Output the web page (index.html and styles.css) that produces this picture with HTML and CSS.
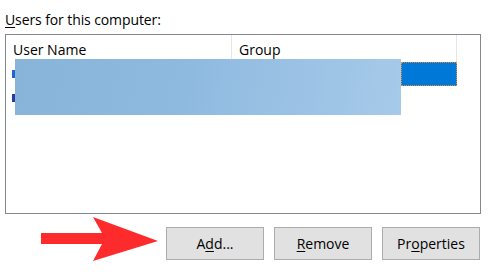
FILE: index.html
```html
<!DOCTYPE html>
<html lang="en">
<head>
  <meta charset="UTF-8" />
  <title>User Accounts</title>
  <link rel="stylesheet" href="styles.css">
</head>
<body>
  <div class="panel">
    <div class="label"><u>U</u>sers for this computer:</div>

    <!-- user list -->
    <div class="listbox">
      <div class="head">
        <div class="col name">User Name</div>
        <div class="col group">Group</div>
        <div class="col rest"></div>
      </div>
      <div class="row">
        <div class="cell name"><span class="ico"></span></div>
        <div class="cell group"></div>
        <div class="cell sel"></div>
      </div>
      <div class="row">
        <div class="cell name"><span class="ico dark"></span></div>
        <div class="cell group"></div>
        <div class="cell"></div>
      </div>
      <div class="blur"></div>
    </div>

    <!-- buttons -->
    <div class="actions">
      <svg class="arrow" width="120" height="46" viewBox="40 215 120 46">
        <polygon points="41,232 102,232 93,216 158,240 93,260 102,243 41,243" fill="#fd2b2b"/>
      </svg>
      <button>A<u>d</u>d...</button>
      <button><u>R</u>emove</button>
      <button>Pr<u>o</u>perties</button>
    </div>
  </div>
</body>
</html>
```

FILE: styles.css
```css
body { margin: 0; background: #fff; font-family: "Open Sans", "Noto Sans", sans-serif; font-size: 14px; color: #000; }
.panel { width: 490px; height: 273px; padding: 10px 0 0 5px; box-sizing: border-box; }
.label { height: 24px; line-height: 20px; letter-spacing: -0.1px; }
.label u, button u { text-decoration-thickness: 1px; text-underline-offset: 2px; }
.listbox { position: relative; width: 476px; height: 180px; border: 1px solid #828790; box-sizing: border-box; }
.head { display: flex; height: 27px; }
.col { line-height: 26px; padding: 2px 0 0 7px; box-sizing: border-box; }
.head .name { width: 226px; border-right: 1px solid #e5e5e5; }
.head .group { width: 225px; border-right: 1px solid #e5e5e5; }
.row { display: flex; height: 24px; }
.cell.name { width: 227px; padding-left: 6px; box-sizing: border-box; display: flex; align-items: center; }
.cell.group { width: 168px; }
.cell.sel { width: 56px; background: #0078d7; outline: 1px dotted #f08c2c; outline-offset: -1px; }
.ico { width: 4px; height: 8px; background: #1f62d0; }
.ico.dark { background: #2b3a9e; }
.blur { position: absolute; left: 9px; top: 24px; width: 386px; height: 56px; background: linear-gradient(100deg, #88b4da 0%, #8fbae0 45%, #a6cae9 100%); }
.actions { display: flex; justify-content: flex-end; gap: 10px; margin-top: 13px; padding-right: 10px; position: relative; }
.arrow { position: absolute; left: 35px; top: -11px; }
button { width: 98px; height: 33px; background: #e1e1e1; border: 1px solid #adadad; font-family: inherit; font-size: 14px; color: #000; padding: 0; }
```
